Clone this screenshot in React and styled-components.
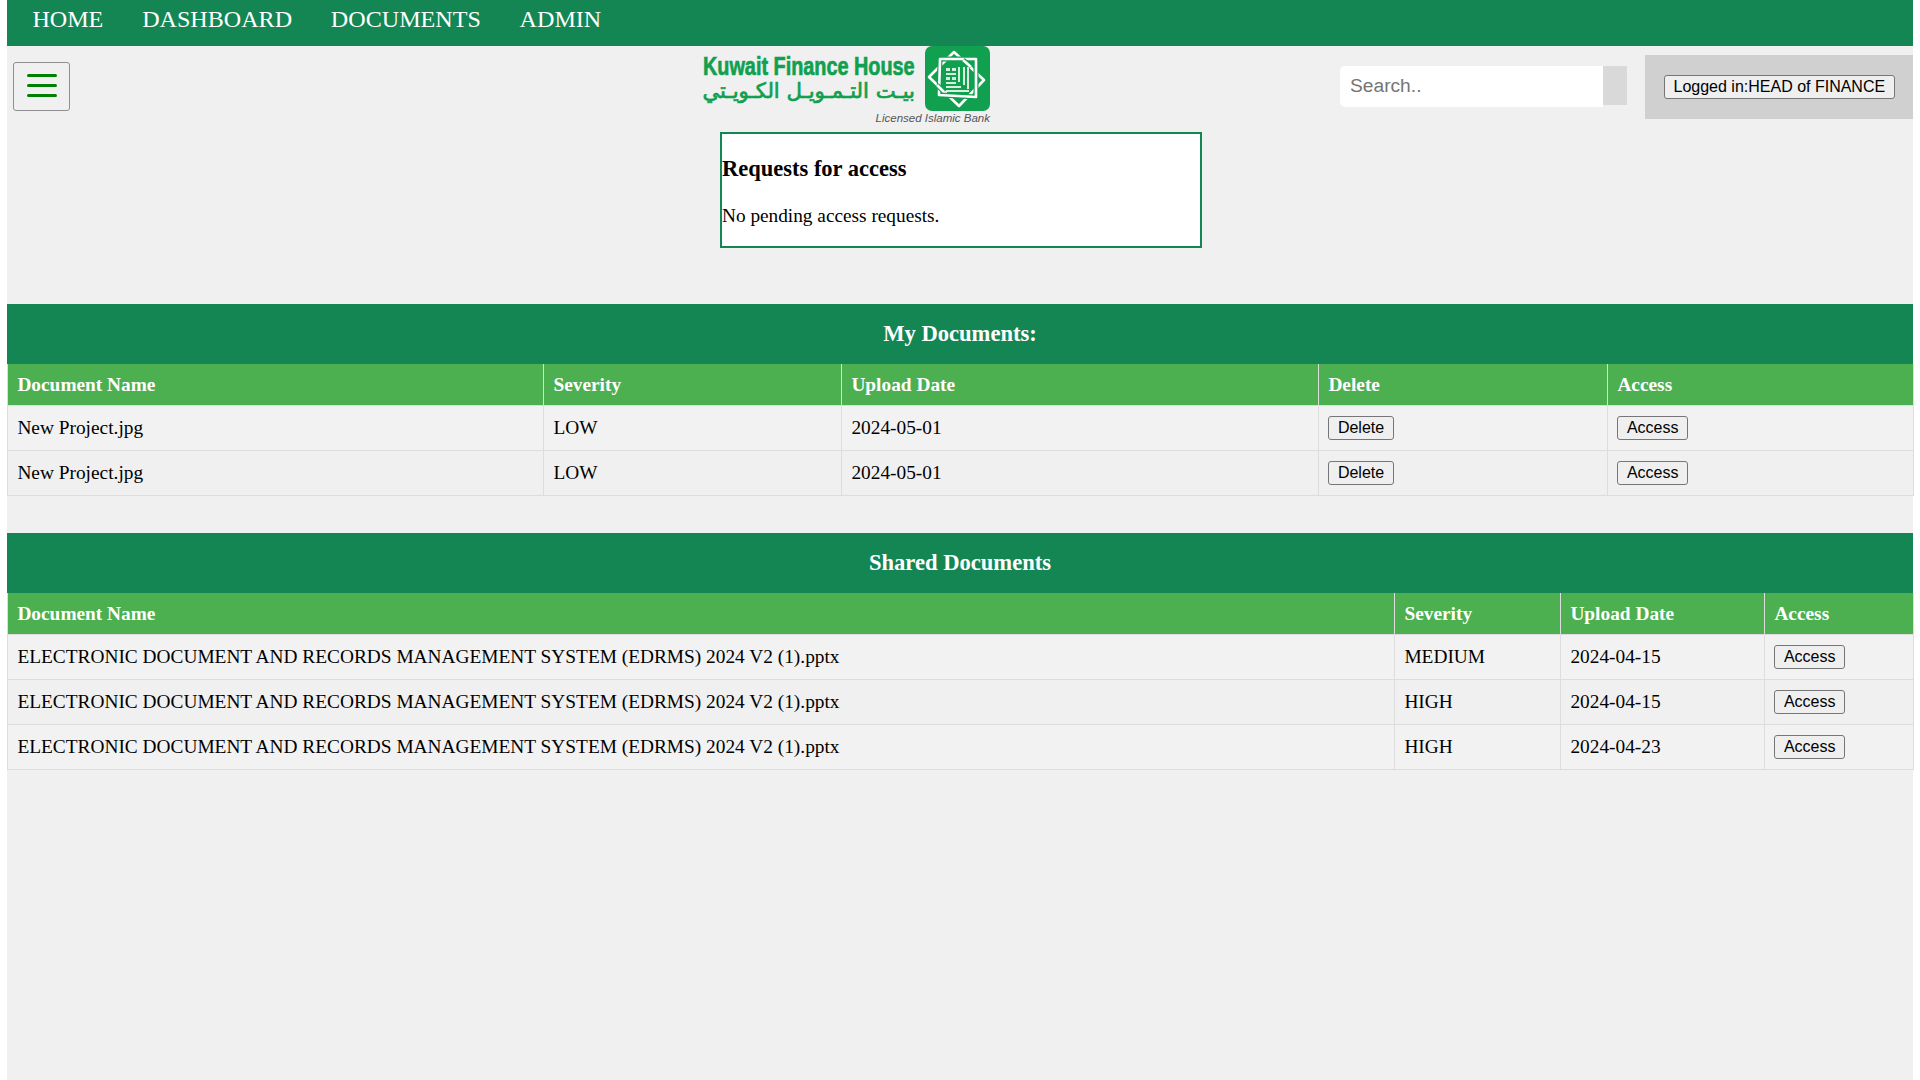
import React from "react";
import styled, { createGlobalStyle } from "styled-components";

const GlobalStyle = createGlobalStyle`
    html, body {
        margin: 0;
        padding: 0;
        background: #fff;
    }
    body {
        font-family: "Liberation Serif", "Times New Roman", serif;
        font-size: 19.35px;
        color: #000;
    }
`

const GREEN = '#138654';
const LIGHT_GREEN = '#4caf50';
const LOGO_GREEN = '#10a04f';

const MY_COLS = [536, 298, 477, 289, 306];
const SHARED_COLS = [1387, 166, 204, 149];

const MY_DOCS = [
    { name: 'New Project.jpg', severity: 'LOW', date: '2024-05-01' },
    { name: 'New Project.jpg', severity: 'LOW', date: '2024-05-01' },
];

const EDRMS = 'ELECTRONIC DOCUMENT AND RECORDS MANAGEMENT SYSTEM (EDRMS) 2024 V2 (1).pptx';

const SHARED_DOCS = [
    { name: EDRMS, severity: 'MEDIUM', date: '2024-04-15' },
    { name: EDRMS, severity: 'HIGH', date: '2024-04-15' },
    { name: EDRMS, severity: 'HIGH', date: '2024-04-23' },
];

const DIAMOND = 'M29 6 L59 34 L34 60 L4 31 Z';
const SQUARE = 'M15 13 L51 13 L51 51 L14 49 Z';

const Logo = () => (
    <LogoWrap>
        <LogoText>
            <LogoName>Kuwait Finance House</LogoName>
            <LogoArabic dir="rtl" lang="ar">بيـت التـمـويـل الكـويـتي</LogoArabic>
        </LogoText>
        <svg width="65" height="65" viewBox="0 0 65 65">
            <rect width="65" height="65" rx="7" fill={LOGO_GREEN} />
            <path d={DIAMOND} fill="none" stroke="#fff" strokeWidth="2.6" strokeLinejoin="round" />
            <path d={SQUARE} fill="none" stroke={LOGO_GREEN} strokeWidth="5" strokeLinejoin="round" />
            <path d={SQUARE} fill="none" stroke="#fff" strokeWidth="2.6" strokeLinejoin="round" />
            {/* over-under of the two ribbons */}
            <g fill="none">
                <path d="M38 14 L46 21" stroke={LOGO_GREEN} strokeWidth="5" />
                <path d="M38 14 L46 21" stroke="#fff" strokeWidth="2.6" />
                <path d="M19 46 L12 39" stroke={LOGO_GREEN} strokeWidth="5" />
                <path d="M19 46 L12 39" stroke="#fff" strokeWidth="2.6" />
            </g>
            <g fill="#d8efe0">
                <rect x="21" y="22" width="4" height="3" />
                <rect x="27" y="22" width="4" height="3" />
                <rect x="33" y="21" width="2" height="15" />
                <rect x="38" y="21" width="2" height="18" />
                <rect x="42" y="21" width="2" height="22" />
                <rect x="21" y="27" width="10" height="2" />
                <rect x="21" y="31" width="4" height="3" />
                <rect x="27" y="31" width="4" height="3" />
                <rect x="21" y="36" width="10" height="2" />
                <rect x="21" y="40" width="15" height="2" />
                <rect x="21" y="44" width="23" height="2" />
            </g>
        </svg>
        <LogoTagline>Licensed Islamic Bank</LogoTagline>
    </LogoWrap>
);

const DocTable = ({ cols, headers, rows, withDelete }) => (
    <Table>
        <colgroup>
            {cols.map((w, i) => <col key={i} style={{ width: w }} />)}
        </colgroup>
        <thead>
            <tr>{headers.map((h) => <Th key={h}>{h}</Th>)}</tr>
        </thead>
        <tbody>
            {rows.map((row, i) => (
                <Row key={i}>
                    <Td>{row.name}</Td>
                    <Td>{row.severity}</Td>
                    <Td>{row.date}</Td>
                    {withDelete && <Td><Button>Delete</Button></Td>}
                    <Td><Button>Access</Button></Td>
                </Row>
            ))}
        </tbody>
    </Table>
);

export default function App() {
    return (
        <Page>
            <GlobalStyle />
            <TopNav>
                <NavLink>HOME</NavLink>
                <NavLink>DASHBOARD</NavLink>
                <NavLink>DOCUMENTS</NavLink>
                <NavLink>ADMIN</NavLink>
            </TopNav>
            <Header>
                <MenuButton aria-label="menu"><MenuBar /><MenuBar /><MenuBar /></MenuButton>
                <Logo />
                <SearchBox>
                    <SearchInput placeholder="Search.." />
                    <SearchButton />
                </SearchBox>
                <LoggedIn><Button>Logged in:HEAD of FINANCE</Button></LoggedIn>
            </Header>
            <RequestBox>
                <RequestTitle>Requests for access</RequestTitle>
                <RequestText>No pending access requests.</RequestText>
            </RequestBox>
            <Section>
                <SectionTitle>My Documents:</SectionTitle>
                <DocTable
                    cols={MY_COLS}
                    headers={['Document Name', 'Severity', 'Upload Date', 'Delete', 'Access']}
                    rows={MY_DOCS}
                    withDelete
                />
            </Section>
            <Section $second>
                <SectionTitle>Shared Documents</SectionTitle>
                <DocTable
                    cols={SHARED_COLS}
                    headers={['Document Name', 'Severity', 'Upload Date', 'Access']}
                    rows={SHARED_DOCS}
                />
            </Section>
        </Page>
    );
}

const Page = styled.div`
    margin: 0 7px;
    min-height: 100vh;
    background: #f0f0f0;
`

const TopNav = styled.nav`
    display: flex;
    height: 46px;
    padding-left: 6px;
    background: ${GREEN};
`

const NavLink = styled.a`
    padding: 0 19.4px;
    font-size: 24.1px;
    line-height: 38px;
    color: #fff;
`

const Header = styled.header`
    display: grid;
    grid-template-columns: 690px 287px 1fr auto;
    height: 86px;
    padding-left: 6px;
`

const MenuButton = styled.button`
    display: flex;
    flex-direction: column;
    justify-content: center;
    align-items: center;
    gap: 7px;
    width: 57px;
    height: 49px;
    margin-top: 16px;
    padding: 0 0 3px;
    background: #f0f0f0;
    border: 1px solid #8f8f8f;
    border-radius: 3px;
`

const MenuBar = styled.span`
    width: 30px;
    height: 3px;
    border-radius: 2px;
    background: #008000;
`

const LogoWrap = styled.div`
    position: relative;
    display: flex;
    justify-content: space-between;
    height: 79px;
    width: 287px;
`

const LogoText = styled.div`
    display: flex;
    flex-direction: column;
    width: 212px;
    padding-top: 8px;
    color: ${LOGO_GREEN};
`

const LogoName = styled.div`
    font-family: "Liberation Sans", Arial, sans-serif;
    font-size: 26px;
    font-weight: 700;
    line-height: 25px;
    white-space: nowrap;
    -webkit-text-stroke: 0.7px ${LOGO_GREEN};
    transform: scaleX(0.763);
    transform-origin: left center;
`

const LogoArabic = styled.div`
    font-family: "DejaVu Sans", sans-serif;
    font-size: 21.2px;
    font-weight: 400;
    line-height: 24px;
    white-space: nowrap;
    text-align: right;
    -webkit-text-stroke: 0.7px ${LOGO_GREEN};
`

const LogoTagline = styled.div`
    position: absolute;
    right: 0;
    bottom: 1px;
    font-family: "Liberation Sans", Arial, sans-serif;
    font-size: 11.5px;
    font-style: italic;
    color: #555;
`

const SearchBox = styled.div`
    display: flex;
    align-items: flex-start;
    margin: 20px 0 0 350px;
`

const SearchInput = styled.input`
    width: 263px;
    height: 41px;
    padding: 0 10px 1px;
    box-sizing: border-box;
    border: none;
    border-radius: 5px 0 0 5px;
    background: #fff;
    font-family: "Liberation Sans", Arial, sans-serif;
    font-size: 19.2px;
    &::placeholder { color: #757575; }
`

const SearchButton = styled.button`
    width: 24px;
    height: 39px;
    padding: 0;
    border: none;
    background: #d9d9d9;
`

const LoggedIn = styled.div`
    display: flex;
    align-items: center;
    width: 268px;
    height: 64px;
    margin-top: 9px;
    padding: 0 0 1px 19px;
    box-sizing: border-box;
    background: #d0d0d0;
`

const Button = styled.button`
    padding: 2px 8.5px;
    font-family: "Liberation Sans", Arial, sans-serif;
    font-size: 16px;
    line-height: 18px;
    color: #000;
    background: #efefef;
    border: 1px solid #767676;
    border-radius: 3px;
`

const RequestBox = styled.div`
    width: 478px;
    height: 112px;
    margin-left: 713px;
    background: #fff;
    border: 2px solid ${GREEN};
`

const RequestTitle = styled.h3`
    margin: 0;
    padding-top: 22px;
    font-size: 22.5px;
    line-height: 25px;
`

const RequestText = styled.p`
    margin: 0;
    padding-top: 24px;
    font-size: 19.3px;
    line-height: 22px;
`

const Section = styled.section`
    margin-top: ${(p) => (p.$second ? '37px' : '56px')};
`

const SectionTitle = styled.h2`
    margin: 0;
    height: 60px;
    font-size: 22.6px;
    line-height: 60px;
    text-align: center;
    color: #fff;
    background: ${GREEN};
`

const Table = styled.table`
    width: 100%;
    table-layout: fixed;
    border-collapse: collapse;
`

const Th = styled.th`
    padding: 10px 9.4px;
    font-size: 19.35px;
    line-height: 21px;
    text-align: left;
    color: #fff;
    background: ${LIGHT_GREEN};
    border: 1px solid #ddd;
    border-top: none;
`

const Td = styled.td`
    padding: 10px 9.4px;
    font-size: 19.35px;
    line-height: 20px;
    border: 1px solid #ddd;
`

const Row = styled.tr`
    &:nth-child(odd) { background: #f2f2f2; }
`
